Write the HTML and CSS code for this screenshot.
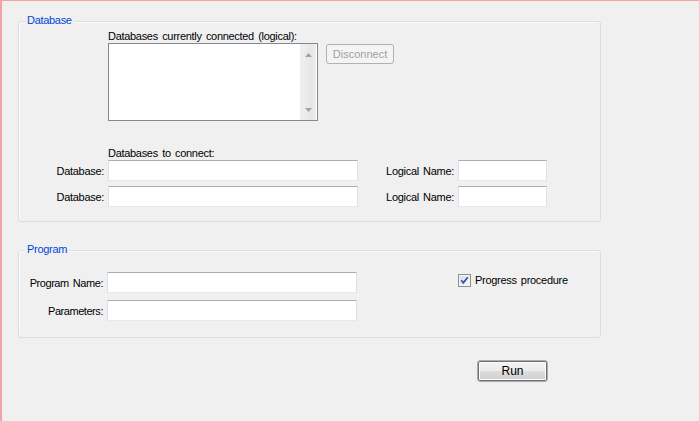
FILE: index.html
```
<!DOCTYPE html>
<html>
<head>
<meta charset="utf-8">
<link rel="stylesheet" href="styles.css">
</head>
<body>
<div class="window">
  <div class="group group-db">
    <span class="legend">Database</span>
    <div class="db-top">
      <div class="caption">Databases currently connected (logical):</div>
      <div class="list-row">
        <div class="listbox">
          <div class="list-body"></div>
          <div class="scrollbar">
            <svg width="7" height="4" viewBox="0 0 7 4"><polygon points="0,4 7,4 3.5,0" fill="#a3a3a3"/></svg>
            <svg width="7" height="4" viewBox="0 0 7 4"><polygon points="0,0 7,0 3.5,4" fill="#a3a3a3"/></svg>
          </div>
        </div>
        <button class="btn-disabled">Disconnect</button>
      </div>
      <div class="caption caption-connect">Databases to connect:</div>
    </div>
    <div class="form-grid">
      <label class="lbl">Database:</label>
      <div class="input"></div>
      <label class="lbl">Logical Name:</label>
      <div class="input"></div>
      <label class="lbl">Database:</label>
      <div class="input"></div>
      <label class="lbl">Logical Name:</label>
      <div class="input"></div>
    </div>
  </div>

  <div class="group group-prog">
    <span class="legend">Program</span>
    <div class="prog-grid">
      <label class="lbl">Program Name:</label>
      <div class="input"></div>
      <div class="check-cell">
        <svg class="checkbox" width="13" height="13" viewBox="0 0 13 13">
          <defs>
            <linearGradient id="cbg" x1="0" y1="0" x2="1" y2="1">
              <stop offset="0" stop-color="#d9dde3"/>
              <stop offset="1" stop-color="#f7f8f9"/>
            </linearGradient>
          </defs>
          <rect x="0.5" y="0.5" width="12" height="12" fill="#f4f4f4" stroke="#8e8f8f"/>
          <rect x="2" y="2" width="9" height="9" fill="url(#cbg)"/>
          <path d="M3.3 6.3 L5.3 8.8 L9.8 3.2" stroke="#2e52b5" stroke-width="1.7" fill="none"/>
        </svg>
        <span class="check-text">Progress procedure</span>
      </div>
      <label class="lbl">Parameters:</label>
      <div class="input"></div>
    </div>
  </div>

  <div class="actions">
    <button class="btn-run">Run</button>
  </div>
</div>
</body>
</html>
```
FILE: styles.css
```
html, body {
  margin: 0;
  padding: 0;
}
body {
  font-family: "Liberation Sans", Arial, sans-serif;
  font-size: 11px;
  letter-spacing: -0.3px;
  word-spacing: 1.5px;
  color: #000;
  background: #f0f0f0;
}
.window {
  box-sizing: border-box;
  height: 421px;
  border-top: 1px solid #f2a4a4;
  border-left: 2px solid #f2a4a4;
  background: #f0f0f0;
  padding: 20px 0 0 16px;
}
.group {
  position: relative;
  box-sizing: border-box;
  width: 583px;
  border: 1px solid #d5dfe5;
  border-radius: 3px;
  box-shadow: inset 1px 1px 0 #fbfbfb;
}
.group-db {
  height: 201px;
  padding-top: 8px;
}
.group-prog {
  margin-top: 28px;
  height: 88px;
  padding-top: 21px;
}
.legend {
  position: absolute;
  top: -8px;
  left: 6px;
  padding: 0 2px;
  line-height: 13px;
  background: #f0f0f0;
  color: #0046d5;
}
.db-top {
  margin-left: 89px;
}
.caption {
  line-height: 13px;
  height: 13px;
}
.caption-connect {
  margin-top: 26px;
}
.list-row {
  display: flex;
  align-items: flex-start;
}
.listbox {
  box-sizing: border-box;
  width: 210px;
  height: 78px;
  border: 1px solid #828790;
  background: #fff;
  display: flex;
}
.list-body {
  flex: 1;
}
.scrollbar {
  width: 16px;
  margin-right: 1px;
  background: linear-gradient(to right, #f0f0f0 0, #ebebeb 40%, #e6e6e6 70%, #eeeeee 100%);
  display: flex;
  flex-direction: column;
  justify-content: space-between;
  align-items: center;
  padding: 9px 0 8px;
  box-sizing: border-box;
}
.scrollbar svg {
  display: block;
}
.btn-disabled {
  margin: 1px 0 0 8px;
  box-sizing: border-box;
  width: 68px;
  height: 20px;
  padding: 0;
  border: 1px solid #adb2b5;
  border-radius: 3px;
  background: #f4f4f4;
  color: #a0a0a0;
  font: inherit;
  letter-spacing: 0;
}
.form-grid {
  display: grid;
  grid-template-columns: 89px 250px 100px 89px;
  grid-auto-rows: 21px;
  row-gap: 5px;
  align-items: center;
}
.prog-grid {
  display: grid;
  grid-template-columns: 88px 250px auto;
  grid-auto-rows: 21px;
  row-gap: 7px;
  align-items: center;
}
.lbl {
  text-align: right;
  padding-right: 4px;
  white-space: nowrap;
}
.prog-grid .lbl {
  letter-spacing: -0.45px;
}
.input {
  box-sizing: border-box;
  height: 21px;
  background: #fff;
  border: 1px solid #dde2e8;
  border-top-color: #abadb3;
  border-bottom-color: #e3e9ef;
}
.check-cell {
  display: flex;
  align-items: center;
  padding-left: 101px;
  align-self: start;
  margin-top: 2px;
}
.checkbox {
  display: block;
  flex: none;
}
.check-text {
  margin-left: 4px;
  line-height: 13px;
}
.actions {
  margin-top: 23px;
  padding-left: 460px;
}
.btn-run {
  box-sizing: border-box;
  width: 69px;
  height: 20px;
  padding: 0;
  border: 1px solid #707070;
  border-radius: 2px;
  outline: 1px solid #ababab;
  box-shadow: inset 0 0 0 1px #fcfcfc;
  background: linear-gradient(to bottom, #f3f3f3 0, #ececec 48%, #dddddd 52%, #cfcfcf 100%);
  color: #000;
  font: inherit;
  font-size: 12px;
  letter-spacing: 0;
}
```
